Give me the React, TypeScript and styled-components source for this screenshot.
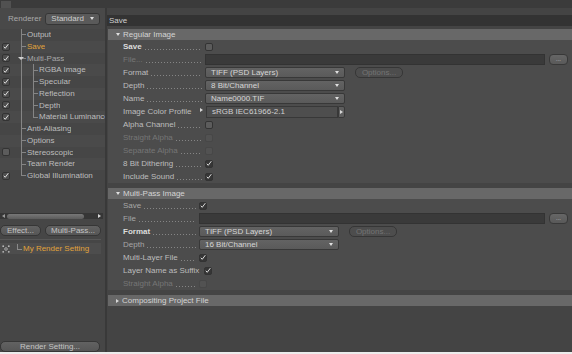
import React from 'react'
import styled, { createGlobalStyle } from 'styled-components'

/**
 * Render Settings window (dark C4D style)
 */

type Tone = 'strong' | 'normal' | 'dim' | 'off'
type Guide = 'pipe' | 'tee' | 'elbow'
type Check = 'on' | 'off' | 'disabled'

const GlobalStyle = createGlobalStyle`
  html, body { margin: 0; padding: 0; background: #ececec; }
  body { font-family: 'Liberation Sans', Arial, sans-serif; font-size: 8px; }
  * { box-sizing: border-box; }
`

const toneColor = (t: Tone) =>
  t === 'strong' ? '#dcdcdc' : t === 'normal' ? '#bdbdbd' : t === 'dim' ? '#a6a6a6' : '#767676'

const Window = styled.div`
  width: 572px;
  height: 352px;
  display: flex;
  flex-direction: column;
  background: #464646;
  overflow: hidden;
`

const TopStrip = styled.div`
  height: 8px;
  flex: none;
  background: #3b3b3b;
  display: flex;
  align-items: center;
`

const Grip = styled.div`
  width: 10px;
  height: 7px;
  margin-left: 1px;
  background-image: radial-gradient(circle, #6a6a6a 0.6px, transparent 0.8px);
  background-size: 2px 2px;
`

const Body = styled.div`
  flex: 1;
  display: flex;
  min-height: 0;
`

const LeftPanel = styled.div`
  width: 105px;
  flex: none;
  display: flex;
  flex-direction: column;
  background: #464646;
`

const Divider = styled.div`
  width: 2px;
  flex: none;
  background: #393939;
`

const RendererBar = styled.div`
  height: 21px;
  flex: none;
  display: flex;
  align-items: center;
  padding-left: 8px;
  gap: 4px;
  background: #494949;
  color: #a9a9a9;
`

const RendererSelect = styled.div`
  width: 55px;
  height: 12px;
  display: flex;
  align-items: center;
  justify-content: space-between;
  padding: 0 5px 0 5px;
  background: #5a5a5a;
  border: 1px solid #363636;
  border-radius: 3px;
  color: #cfcfcf;
`

const Caret = styled.span<{ $dir?: 'down' | 'right' | 'left' }>`
  display: inline-block;
  width: 0;
  height: 0;
  flex: none;
  ${p =>
    p.$dir === 'right'
      ? `border-top: 2.5px solid transparent; border-bottom: 2.5px solid transparent; border-left: 3px solid #d8d8d8;`
      : p.$dir === 'left'
        ? `border-top: 2.5px solid transparent; border-bottom: 2.5px solid transparent; border-right: 3px solid #9a9a9a;`
        : `border-left: 2.5px solid transparent; border-right: 2.5px solid transparent; border-top: 3px solid #e0e0e0;`}
`

const TreeArea = styled.div`
  height: 184px;
  flex: none;
`

const TreeRow = styled.div<{ $alt: boolean }>`
  height: 11.75px;
  display: flex;
  align-items: stretch;
  background: ${p => (p.$alt ? '#4a4a4a' : '#464646')};
`

const CheckCell = styled.div`
  width: 14px;
  flex: none;
  display: flex;
  align-items: center;
  padding-left: 2px;
`

const GuideCell = styled.div<{ $kind: Guide }>`
  position: relative;
  width: 12px;
  flex: none;
  background:
    linear-gradient(#858585, #858585) 7px 0 / 1px ${p => (p.$kind === 'elbow' ? '50%' : '100%')} no-repeat
    ${p => (p.$kind !== 'pipe' ? ', linear-gradient(#858585, #858585) 7px 50% / 5px 1px no-repeat' : '')};
`

const Expander = styled.span`
  position: absolute;
  left: 4px;
  top: 4px;
  border-left: 3px solid transparent;
  border-right: 3px solid transparent;
  border-top: 3px solid #d0d0d0;
`

const TreeLabel = styled.span<{ $tone: Tone | 'active' }>`
  padding-left: 1px;
  line-height: 11.75px;
  white-space: nowrap;
  overflow: hidden;
  color: ${p => (p.$tone === 'active' ? '#e0a23a' : toneColor(p.$tone))};
`

const Box = styled.span<{ $state: Check; $light?: boolean }>`
  width: 8px;
  height: 8px;
  flex: none;
  display: inline-flex;
  align-items: center;
  justify-content: center;
  border-radius: 2px;
  border: 1px solid ${p => (p.$state === 'disabled' ? '#474747' : '#333')};
  background: ${p =>
    p.$state === 'on' ? (p.$light ? '#4e4e4e' : '#363636') : p.$state === 'off' ? '#5c5c5c' : '#525252'};
`

const ScrollTrack = styled.div`
  height: 6px;
  flex: none;
  margin-right: 2px;
  display: flex;
  align-items: center;
  padding: 0 2px;
  gap: 2px;
  background: #363636;
`

const ScrollThumb = styled.div`
  width: 77px;
  height: 5px;
  border-radius: 3px;
  background: linear-gradient(#777, #5c5c5c);
`

const ScrollEnd = styled.span`
  margin-left: auto;
  display: flex;
`

const ButtonRow = styled.div`
  display: flex;
  gap: 4px;
  margin-top: 6px;
  padding-right: 4px;
`

const PillButton = styled.div<{ $width?: number; $muted?: boolean }>`
  height: 11px;
  ${p => (p.$width ? `width: ${p.$width}px;` : 'flex: 1;')}
  display: flex;
  align-items: center;
  justify-content: center;
  border-radius: 5px;
  border: 1px solid #363636;
  background: ${p => (p.$muted ? '#4d4d4d' : 'linear-gradient(#626262, #565656)')};
  color: ${p => (p.$muted ? '#747474' : '#c4c4c4')};
  white-space: nowrap;
`

const Separator = styled.div`
  height: 1px;
  margin-top: 3px;
  margin-right: 4px;
  background: #575757;
`

const SettingRow = styled.div`
  height: 11px;
  margin-top: 3px;
  margin-right: 4px;
  display: flex;
  align-items: center;
  padding-left: 2px;
  background: #4d4d4d;
`

const Corner = styled.span`
  width: 5px;
  height: 6px;
  margin: 0 1px 3px 7px;
  border-left: 1px solid #8a8a8a;
  border-bottom: 1px solid #8a8a8a;
`

const SettingLabel = styled.span`
  color: #e0a23a;
`

const LeftFooter = styled.div`
  margin-top: auto;
  padding-right: 5px;
`

const RightPanel = styled.div`
  flex: 1;
  display: flex;
  flex-direction: column;
  background: #444;
  padding-top: 7px;
`

const TitleBar = styled.div`
  height: 11px;
  flex: none;
  display: flex;
  align-items: center;
  padding-left: 2px;
  background: #333;
  color: #d0d0d0;
`

const GroupHeader = styled.div<{ $gap: number }>`
  height: 11px;
  flex: none;
  margin: ${p => p.$gap}px 0 0 1px;
  display: flex;
  align-items: center;
  gap: 3px;
  padding-left: 8px;
  background: #686868;
  color: #d4d4d4;
`

const GroupBody = styled.div`
  margin-left: 1px;
  background: #4c4c4c;
`

const Row = styled.div`
  height: 13px;
  display: flex;
  align-items: center;
  padding: 0 4px 0 15px;
`

const Label = styled.div<{ $width: number; $tone: Tone }>`
  min-width: ${p => p.$width}px;
  flex: none;
  height: 100%;
  display: flex;
  align-items: center;
  color: ${p => toneColor(p.$tone)};
  font-weight: ${p => (p.$tone === 'strong' ? 'bold' : 'normal')};
`

const LabelText = styled.span`
  white-space: nowrap;
  line-height: 13px;
`

const Leader = styled.span`
  flex: 1;
  min-width: 0;
  align-self: stretch;
  margin: 0 3px 0 2px;
  background-image: linear-gradient(to right, #858585 1px, transparent 1px);
  background-size: 3px 1px;
  background-repeat: repeat-x;
  background-position: 1px calc(100% - 3px);
`

const Pointer = styled.span`
  display: flex;
  margin-left: auto;
  margin-right: 2px;
  margin-bottom: 3px;
`

const Select = styled.div<{ $width: number }>`
  width: ${p => p.$width}px;
  height: 11px;
  flex: none;
  display: flex;
  align-items: center;
  justify-content: space-between;
  padding: 0 5px 0 5px;
  background: linear-gradient(#636363, #5a5a5a);
  border: 1px solid #383838;
  border-radius: 2px;
  color: #d6d6d6;
  white-space: nowrap;
`

const Field = styled.div<{ $width?: number }>`
  ${p => (p.$width ? `width: ${p.$width}px;` : 'flex: 1;')}
  height: 11px;
  display: flex;
  align-items: center;
  padding-left: 5px;
  background: #3a3a3a;
  border: 1px solid #333;
  color: #d0d0d0;
`

const ProfileField = styled(Field)`
  height: 12px;
  margin-left: 1px;
  background: #4e4e4e;
  border-color: #383838;
`

const ProfileButton = styled.div`
  width: 7px;
  height: 12px;
  display: flex;
  align-items: center;
  justify-content: center;
  background: #5e5e5e;
  border: 1px solid #383838;
  border-radius: 0 2px 2px 0;
`

const BrowseButton = styled.div`
  width: 19px;
  height: 11px;
  margin-left: 4px;
  flex: none;
  display: flex;
  align-items: flex-end;
  justify-content: center;
  padding-bottom: 2px;
  border-radius: 4px;
  border: 1px solid #383838;
  background: linear-gradient(#666, #595959);
  color: #cfcfcf;
  font-size: 6px;
  line-height: 6px;
`

const OptionsButton = styled(PillButton)`
  margin-left: 10px;
`

const CheckMark = () => (
  <svg width="7" height="7" viewBox="0 0 7 7">
    <path d="M1 3.8 L2.6 5.6 L6.2 0.8" fill="none" stroke="#e6e6e6" strokeWidth="1.1" />
  </svg>
)

const CheckBox = ({ state, light }: { state: Check; light?: boolean }) => (
  <Box $state={state} $light={light}>
    {state === 'on' ? <CheckMark /> : null}
  </Box>
)

const SettingIcon = () => (
  <svg width="8" height="8" viewBox="0 0 8 8">
    <circle cx="4" cy="4" r="1.3" fill="none" stroke="#bbb" strokeWidth="0.8" />
    <circle cx="1.2" cy="1.2" r="0.9" fill="#bbb" />
    <circle cx="6.8" cy="1.2" r="0.9" fill="#bbb" />
    <circle cx="1.2" cy="6.8" r="0.9" fill="#bbb" />
    <circle cx="6.8" cy="6.8" r="0.9" fill="#bbb" />
  </svg>
)

const tree: {
  label: string
  guides: Guide[]
  check?: Check
  tone: Tone | 'active'
  expand?: boolean
}[] = [
  { label: 'Output', guides: ['tee'], tone: 'normal' },
  { label: 'Save', guides: ['tee'], check: 'on', tone: 'active' },
  { label: 'Multi-Pass', guides: ['tee'], check: 'on', tone: 'dim', expand: true },
  { label: 'RGBA Image', guides: ['pipe', 'tee'], check: 'on', tone: 'normal' },
  { label: 'Specular', guides: ['pipe', 'tee'], check: 'on', tone: 'normal' },
  { label: 'Reflection', guides: ['pipe', 'tee'], check: 'on', tone: 'normal' },
  { label: 'Depth', guides: ['pipe', 'tee'], check: 'on', tone: 'normal' },
  { label: 'Material Luminance', guides: ['pipe', 'elbow'], check: 'on', tone: 'normal' },
  { label: 'Anti-Aliasing', guides: ['tee'], tone: 'normal' },
  { label: 'Options', guides: ['tee'], tone: 'normal' },
  { label: 'Stereoscopic', guides: ['tee'], check: 'off', tone: 'normal' },
  { label: 'Team Render', guides: ['tee'], tone: 'normal' },
  { label: 'Global Illumination', guides: ['elbow'], check: 'on', tone: 'normal' },
]

type Control =
  | { kind: 'check'; state: Check }
  | { kind: 'file' }
  | { kind: 'select'; value: string; options?: boolean }
  | { kind: 'profile'; value: string }

type Param = { label: string; tone: Tone; control: Control; pointer?: boolean }

const regular: Param[] = [
  { label: 'Save', tone: 'strong', control: { kind: 'check', state: 'off' } },
  { label: 'File...', tone: 'off', control: { kind: 'file' } },
  { label: 'Format', tone: 'normal', control: { kind: 'select', value: 'TIFF (PSD Layers)', options: true } },
  { label: 'Depth', tone: 'normal', control: { kind: 'select', value: '8 Bit/Channel' } },
  { label: 'Name', tone: 'normal', control: { kind: 'select', value: 'Name0000.TIF' } },
  { label: 'Image Color Profile', tone: 'normal', pointer: true, control: { kind: 'profile', value: 'sRGB IEC61966-2.1' } },
  { label: 'Alpha Channel', tone: 'normal', control: { kind: 'check', state: 'off' } },
  { label: 'Straight Alpha', tone: 'off', control: { kind: 'check', state: 'disabled' } },
  { label: 'Separate Alpha', tone: 'off', control: { kind: 'check', state: 'disabled' } },
  { label: '8 Bit Dithering', tone: 'normal', control: { kind: 'check', state: 'on' } },
  { label: 'Include Sound', tone: 'normal', control: { kind: 'check', state: 'on' } },
]

const multiPass: Param[] = [
  { label: 'Save', tone: 'dim', control: { kind: 'check', state: 'on' } },
  { label: 'File', tone: 'dim', control: { kind: 'file' } },
  { label: 'Format', tone: 'strong', control: { kind: 'select', value: 'TIFF (PSD Layers)', options: true } },
  { label: 'Depth', tone: 'dim', control: { kind: 'select', value: '16 Bit/Channel' } },
  { label: 'Multi-Layer File', tone: 'normal', control: { kind: 'check', state: 'on' } },
  { label: 'Layer Name as Suffix', tone: 'normal', control: { kind: 'check', state: 'on' } },
  { label: 'Straight Alpha', tone: 'off', control: { kind: 'check', state: 'disabled' } },
]

const ParamRow = ({ param, labelWidth }: { param: Param; labelWidth: number }) => {
  const c = param.control
  return (
    <Row>
      <Label $width={labelWidth} $tone={param.tone}>
        <LabelText>{param.label}</LabelText>
        {param.pointer ? (
          <Pointer>
            <Caret $dir="right" />
          </Pointer>
        ) : (
          <Leader />
        )}
      </Label>
      {c.kind === 'check' && <CheckBox state={c.state} />}
      {c.kind === 'file' && (
        <>
          <Field />
          <BrowseButton>...</BrowseButton>
        </>
      )}
      {c.kind === 'select' && (
        <>
          <Select $width={140}>
            <span>{c.value}</span>
            <Caret />
          </Select>
          {c.options ? (
            <OptionsButton $width={48} $muted>
              Options...
            </OptionsButton>
          ) : null}
        </>
      )}
      {c.kind === 'profile' && (
        <>
          <ProfileField $width={132}>{c.value}</ProfileField>
          <ProfileButton>
            <Caret $dir="right" />
          </ProfileButton>
        </>
      )}
    </Row>
  )
}

const App: React.FC = () => {
  return (
    <>
      <GlobalStyle />
      <Window>
        <TopStrip>
          <Grip />
        </TopStrip>
        <Body>
          <LeftPanel>
            <RendererBar>
              <span>Renderer</span>
              <RendererSelect>
                <span>Standard</span>
                <Caret />
              </RendererSelect>
            </RendererBar>
            <TreeArea>
              {tree.map((item, index) => (
                <TreeRow key={item.label} $alt={index % 2 === 1}>
                  <CheckCell>{item.check ? <CheckBox state={item.check} light /> : null}</CheckCell>
                  {item.guides.map((g, i) => (
                    <GuideCell key={i} $kind={g}>
                      {item.expand && i === item.guides.length - 1 ? <Expander /> : null}
                    </GuideCell>
                  ))}
                  <TreeLabel $tone={item.tone}>{item.label}</TreeLabel>
                </TreeRow>
              ))}
            </TreeArea>
            <ScrollTrack>
              <Caret $dir="left" />
              <ScrollThumb />
              <ScrollEnd>
                <Caret $dir="right" />
              </ScrollEnd>
            </ScrollTrack>
            <ButtonRow>
              <PillButton $width={41}>Effect...</PillButton>
              <PillButton>Multi-Pass...</PillButton>
            </ButtonRow>
            <Separator />
            <SettingRow>
              <SettingIcon />
              <Corner />
              <SettingLabel>My Render Setting</SettingLabel>
            </SettingRow>
            <LeftFooter>
              <PillButton>Render Setting...</PillButton>
            </LeftFooter>
          </LeftPanel>
          <Divider />
          <RightPanel>
            <TitleBar>Save</TitleBar>
            <GroupHeader $gap={3}>
              <Caret />
              <span>Regular Image</span>
            </GroupHeader>
            <GroupBody>
              {regular.map(p => (
                <ParamRow key={p.label} param={p} labelWidth={82} />
              ))}
            </GroupBody>
            <GroupHeader $gap={5}>
              <Caret />
              <span>Multi-Pass Image</span>
            </GroupHeader>
            <GroupBody>
              {multiPass.map(p => (
                <ParamRow key={p.label} param={p} labelWidth={76} />
              ))}
            </GroupBody>
            <GroupHeader $gap={5}>
              <Caret $dir="right" />
              <span>Compositing Project File</span>
            </GroupHeader>
          </RightPanel>
        </Body>
      </Window>
    </>
  )
}

export default App
